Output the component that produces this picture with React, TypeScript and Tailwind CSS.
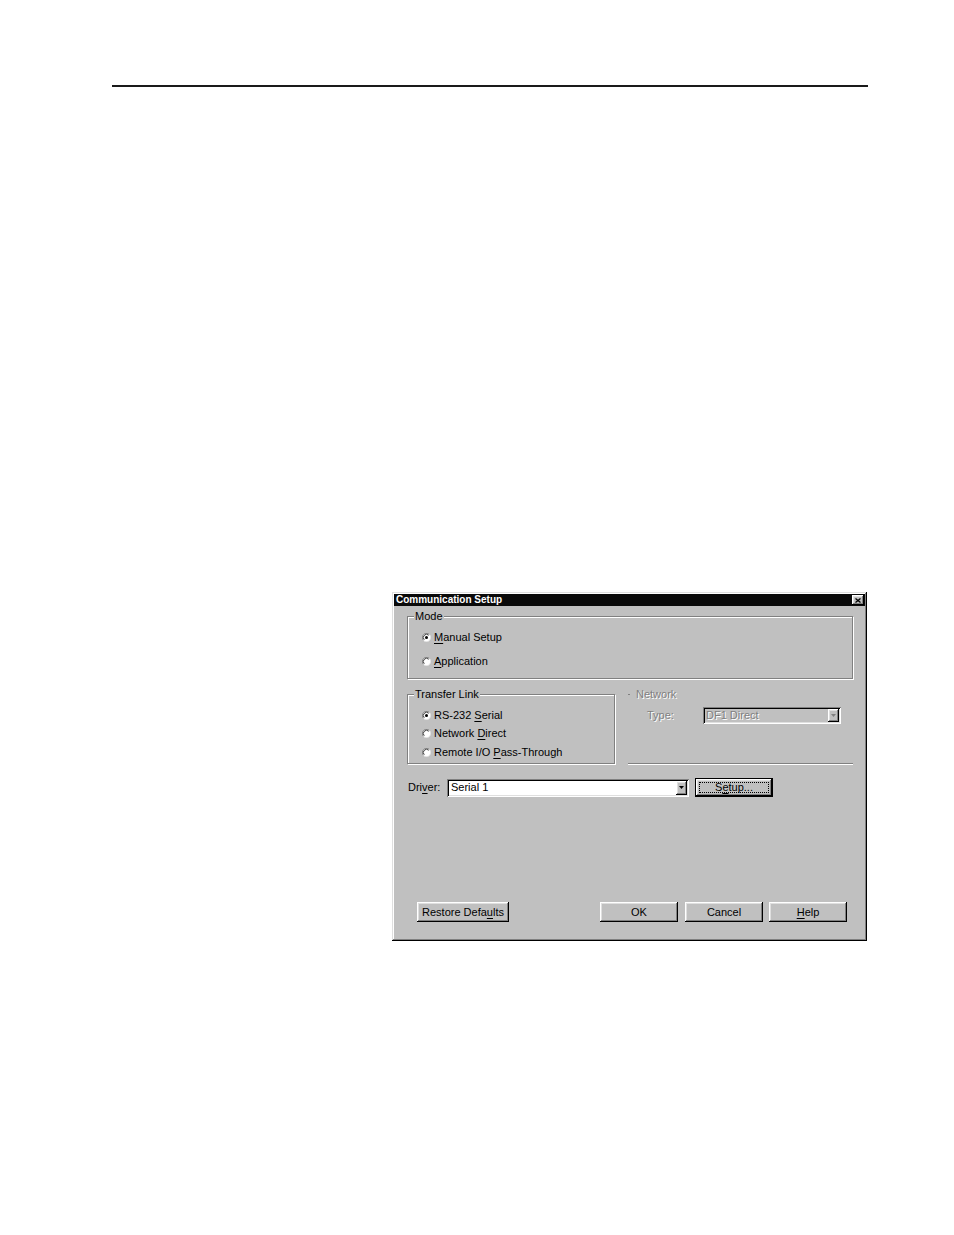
import React from "react";

const raised =
  "shadow-[inset_-1px_-1px_0_#000,inset_1px_1px_0_#fff,inset_-2px_-2px_0_#808080,inset_2px_2px_0_#dfdfdf]";
const sunken =
  "shadow-[inset_1px_1px_0_#808080,inset_-1px_-1px_0_#fff,inset_2px_2px_0_#000,inset_-2px_-2px_0_#dfdfdf]";

function Radio({ checked }: { checked?: boolean }) {
  return (
    <svg width="9" height="9" viewBox="0 0 12 12" className="shrink-0">
      <circle cx="6" cy="6" r="5.5" fill="#fff" />
      <path d="M2 10 A5.5 5.5 0 0 1 10 2" fill="none" stroke="#808080" strokeWidth="1.2" />
      <path d="M10 2 A5.5 5.5 0 0 1 2 10" fill="none" stroke="#dfdfdf" strokeWidth="1.2" />
      <path d="M3 9 A4.2 4.2 0 0 1 9 3" fill="none" stroke="#000" strokeWidth="1" />
      {checked && <circle cx="6" cy="6" r="2" fill="#000" />}
    </svg>
  );
}

function U({ children }: { children: React.ReactNode }) {
  return <span className="underline underline-offset-[2px]">{children}</span>;
}

function RadioRow({ checked, children }: { checked?: boolean; children: React.ReactNode }) {
  return (
    <div className="flex items-center h-[14px] ml-[14px]">
      <Radio checked={checked} />
      <span className="ml-[3px] leading-none">{children}</span>
    </div>
  );
}

function Arrow({ color = "#000" }: { color?: string }) {
  return (
    <svg width="5" height="3" viewBox="0 0 5 3">
      <path d="M0 0 H5 L2.5 3 Z" fill={color} />
    </svg>
  );
}

function Btn({ w, children }: { w: string; children: React.ReactNode }) {
  return (
    <div className={`${w} h-[20px] bg-[#c0c0c0] ${raised} flex items-center justify-center leading-none`}>
      {children}
    </div>
  );
}

export default function App() {
  return (
    <div
      className="w-[954px] h-[1235px] bg-white overflow-hidden text-[11px] text-black"
      style={{ fontFamily: '"Liberation Sans", Arial, sans-serif' }}
    >
      <div className="ml-[112px] mt-[85px] w-[756px] h-[2px] bg-[#1a1a1a]" />

      <div
        className={`ml-[392px] mt-[505px] w-[475px] h-[349px] bg-[#c0c0c0] flex flex-col shadow-[inset_-1px_-1px_0_#000,inset_1px_1px_0_#dfdfdf,inset_-2px_-2px_0_#808080,inset_2px_2px_0_#fff]`}
      >
        {/* Title bar */}
        <div className="mt-[2px] mx-[2px] h-[12px] bg-[#0a0a0a] flex items-center justify-between">
          <span className="pl-[2px] text-white font-bold text-[10px] leading-none">Communication Setup</span>
          <div className={`mr-[1px] w-[12px] h-[10px] bg-[#c0c0c0] ${raised} flex items-center justify-center`}>
            <svg width="6" height="5" viewBox="0 0 6 5">
              <path d="M0.5 0.5 L5.5 4.5 M5.5 0.5 L0.5 4.5" stroke="#000" strokeWidth="1.3" />
            </svg>
          </div>
        </div>

        <div className="ml-[15px] w-[446px] flex flex-col">
          {/* Mode group */}
          <div className="relative mt-[10px] h-[63px] border border-[#808080] shadow-[1px_1px_0_#fff,inset_1px_1px_0_#fff] flex flex-col">
            <span className="absolute -top-[6px] left-[6px] px-[1px] bg-[#c0c0c0] leading-none">Mode</span>
            <div className="mt-[13px]">
              <RadioRow checked>
                <U>M</U>anual Setup
              </RadioRow>
            </div>
            <div className="mt-[10px]">
              <RadioRow>
                <U>A</U>pplication
              </RadioRow>
            </div>
          </div>

          {/* Transfer link + Network */}
          <div className="mt-[15px] flex">
            <div className="relative w-[208px] h-[70px] border border-[#808080] shadow-[1px_1px_0_#fff,inset_1px_1px_0_#fff] flex flex-col">
              <span className="absolute -top-[6px] left-[6px] px-[1px] bg-[#c0c0c0] leading-none">Transfer Link</span>
              <div className="mt-[13px]">
                <RadioRow checked>
                  RS-232 <U>S</U>erial
                </RadioRow>
              </div>
              <div className="mt-[4px]">
                <RadioRow>
                  Network <U>D</U>irect
                </RadioRow>
              </div>
              <div className="mt-[5px]">
                <RadioRow>
                  Remote I/O <U>P</U>ass-Through
                </RadioRow>
              </div>
            </div>

            <div className="relative ml-[13px] w-[225px] h-[70px] border-b border-[#808080] shadow-[0_1px_0_#fff] flex flex-col">
              <div className="absolute top-0 left-0 w-[2px] h-[1px] bg-[#808080]" />
              <span className="absolute -top-[5px] left-[8px] leading-none text-[#808080] [text-shadow:1px_1px_0_#fff]">
                Network
              </span>
              <div className="mt-[13px] flex items-center">
                <span className="ml-[19px] w-[56px] leading-none text-[#808080] [text-shadow:1px_1px_0_#fff]">
                  Type:
                </span>
                <div className={`w-[138px] h-[17px] bg-[#c0c0c0] ${sunken} flex items-center justify-between pl-[3px] pr-[2px]`}>
                  <span className="text-[#808080] leading-none [text-shadow:1px_1px_0_#fff]">DF1 Direct</span>
                  <div className={`w-[11px] h-[13px] bg-[#c0c0c0] ${raised} flex items-center justify-center`}>
                    <Arrow color="#808080" />
                  </div>
                </div>
              </div>
            </div>
          </div>

          {/* Driver row */}
          <div className="mt-[14px] flex items-center">
            <span className="ml-[1px] w-[39px] leading-none">
              Dri<U>v</U>er:
            </span>
            <div className={`w-[242px] h-[18px] bg-white ${sunken} flex items-center justify-between pl-[4px] pr-[2px]`}>
              <span className="leading-none">Serial 1</span>
              <div className={`w-[11px] h-[14px] bg-[#c0c0c0] ${raised} flex items-center justify-center`}>
                <Arrow />
              </div>
            </div>
            <div className="ml-[6px] w-[78px] h-[19px] border border-black">
              <div className={`w-full h-full ${raised} bg-[#c0c0c0] p-[3px]`}>
                <div className="w-full h-full border border-dotted border-black flex items-center justify-center leading-none">
                  S<U>e</U>tup...
                </div>
              </div>
            </div>
          </div>
        </div>

        {/* Bottom buttons */}
        <div className="mt-[105px] flex">
          <div className="ml-[25px]">
            <Btn w="w-[92px]">
              Restore Defa<U>u</U>lts
            </Btn>
          </div>
          <div className="ml-[91px]">
            <Btn w="w-[78px]">OK</Btn>
          </div>
          <div className="ml-[7px]">
            <Btn w="w-[78px]">Cancel</Btn>
          </div>
          <div className="ml-[6px]">
            <Btn w="w-[78px]">
              <U>H</U>elp
            </Btn>
          </div>
        </div>
      </div>
    </div>
  );
}
